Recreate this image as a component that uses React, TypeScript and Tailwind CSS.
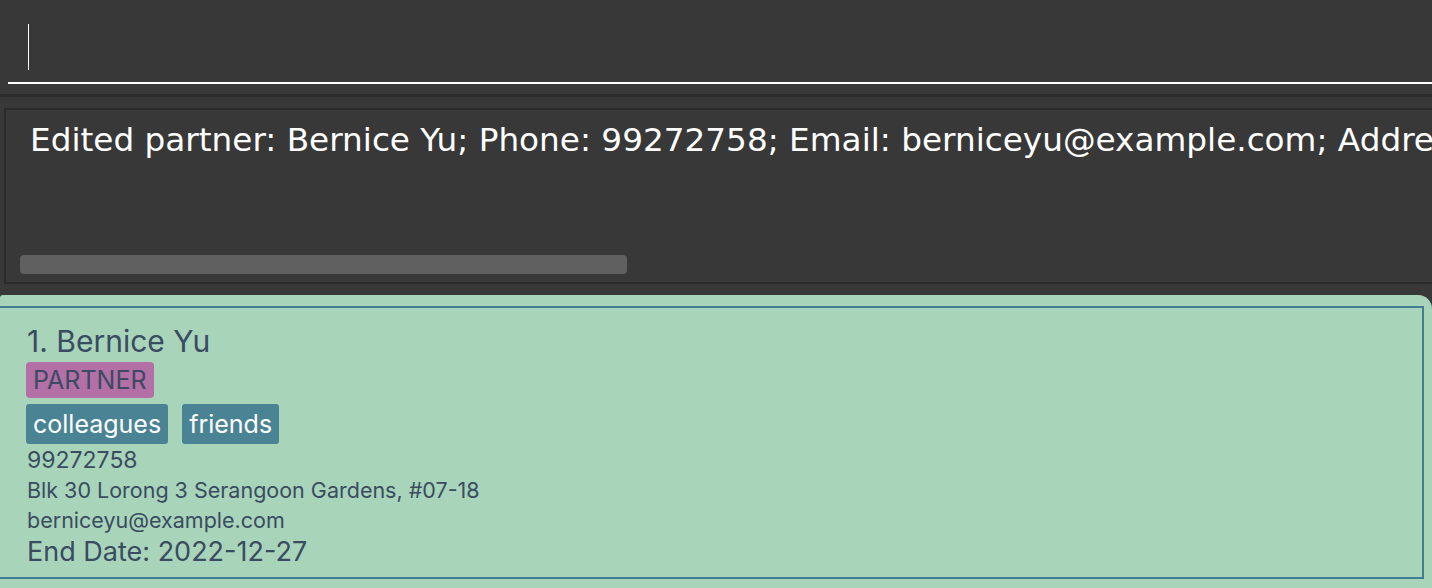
export default function App() {
  return (
    <div className="w-[1432px] h-[588px] bg-[#383838] overflow-hidden flex flex-col">
      {/* command box */}
      <div className="h-[94px] shrink-0 pl-2 pt-6 flex flex-col">
        <div className="pl-5 h-[46px]">
          <div className="w-px h-[46px] bg-white" />
        </div>
        <div className="mt-3 h-[2px] bg-white" />
      </div>
      <div className="h-[3px] shrink-0 bg-[#2b2b2b]" />

      {/* result display */}
      <div className="shrink-0 pt-[11px] pl-1 pb-[11px]">
        <div className="h-[176px] border-2 border-r-0 border-[#2b2b2b] bg-[#383838] flex flex-col overflow-hidden">
          <div
            className="pl-6 pt-[10px] text-[32.7px] leading-[40px] text-white whitespace-nowrap overflow-hidden"
            style={{ fontFamily: '"DejaVu Sans", sans-serif' }}
          >
            Edited partner: Bernice Yu; Phone: 99272758; Email: berniceyu@example.com; Address: Blk 30 Lorong 3 Serangoon Gardens, #07-18
          </div>
          <div className="flex-1" />
          <div className="pl-[14px] pb-[8px]">
            <div className="w-[607px] h-[19px] rounded-[4px] bg-[#606060]" />
          </div>
        </div>
      </div>

      {/* partner card */}
      <div className="flex-1 bg-[#a8d4b9] rounded-tr-[14px] rounded-tl-[3px] pt-[11px] pr-2">
        <div
          className="-ml-[2px] h-[273px] border-2 border-[#427d93] pl-[26px] pt-[14px] text-[#3a4b62] flex flex-col items-start"
          style={{ fontFamily: 'Inter, "Open Sans", sans-serif' }}
        >
          <div className="ml-px text-[30px] leading-[38px]">1. Bernice Yu</div>
          <div className="mt-[2px] px-[7px] rounded-[4px] bg-[#b46fa6] text-[25px] leading-[36px]">PARTNER</div>
          <div className="mt-[6px] flex gap-[14px]">
            <span className="px-[7px] rounded-[3px] bg-[#4a8394] text-white text-[25px] leading-[40px]">colleagues</span>
            <span className="px-[7px] rounded-[3px] bg-[#4a8394] text-white text-[25px] leading-[40px]">friends</span>
          </div>
          <div className="ml-px mt-[1px] text-[23px] leading-[30px]">99272758</div>
          <div className="ml-px text-[21.5px] leading-[30px]">Blk 30 Lorong 3 Serangoon Gardens, #07-18</div>
          <div className="ml-px text-[21.5px] leading-[30px]">berniceyu@example.com</div>
          <div className="ml-px text-[27px] leading-[34px]">End Date: 2022-12-27</div>
        </div>
      </div>
    </div>
  );
}
